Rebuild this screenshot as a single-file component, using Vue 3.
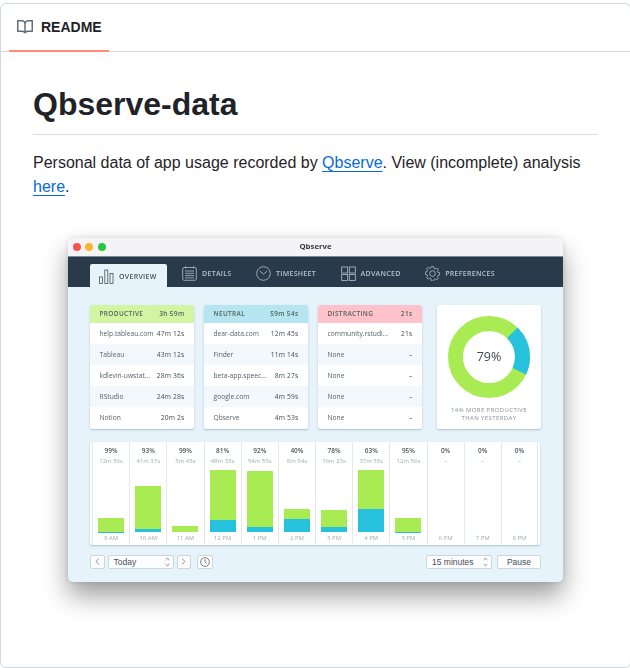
<script setup>
import { computed } from 'vue';

const columns = [
  {
    name: 'PRODUCTIVE', total: '3h 59m', tone: 'green',
    rows: [['help.tableau.com', '47m 12s'], ['Tableau', '43m 12s'], ['kdlevin-uwstat...', '28m 36s'], ['RStudio', '24m 28s'], ['Notion', '20m 2s']]
  },
  {
    name: 'NEUTRAL', total: '59m 54s', tone: 'blue',
    rows: [['dear-data.com', '12m 45s'], ['Finder', '11m 14s'], ['beta-app.speec...', '8m 27s'], ['google.com', '4m 59s'], ['Qbserve', '4m 53s']]
  },
  {
    name: 'DISTRACTING', total: '21s', tone: 'pink',
    rows: [['community.rstudi...', '21s'], ['None', '–'], ['None', '–'], ['None', '–'], ['None', '–']]
  }
];

// hours: green / teal heights in px
const hours = [
  { pct: '99%', time: '12m 56s', label: '9 AM', green: 13.4, teal: 0.3 },
  { pct: '93%', time: '41m 37s', label: '10 AM', green: 43, teal: 2.7 },
  { pct: '99%', time: '5m 43s', label: '11 AM', green: 6, teal: 0 },
  { pct: '81%', time: '48m 33s', label: '12 PM', green: 50, teal: 12 },
  { pct: '92%', time: '54m 55s', label: '1 PM', green: 56.5, teal: 5 },
  { pct: '40%', time: '8m 54s', label: '2 PM', green: 9.7, teal: 13 },
  { pct: '78%', time: '16m 23s', label: '3 PM', green: 17, teal: 4.7 },
  { pct: '63%', time: '37m 55s', label: '4 PM', green: 39, teal: 22.7 },
  { pct: '95%', time: '12m 56s', label: '5 PM', green: 13.5, teal: 0.5 },
  { pct: '0%', time: '–', label: '6 PM', green: 0, teal: 0 },
  { pct: '0%', time: '–', label: '7 PM', green: 0, teal: 0 },
  { pct: '0%', time: '–', label: '8 PM', green: 0, teal: 0 }
];

// donut arc for the teal part
const radius = 33.5;
const circ = 2 * Math.PI * radius;
const tealDash = computed(() => {
  const len = (71 / 360) * circ;
  return `${len} ${circ - len}`;
});
const tealOffset = computed(() => -(44 / 360) * circ);
</script>

<template>
  <div class="page">
    <div class="box">
      <div class="tabs">
        <div class="tab">
          <svg class="book" viewBox="0 0 16 16" width="16" height="16">
            <path d="M0 1.75A.75.75 0 0 1 .75 1h4.253c1.227 0 2.317.59 3 1.501A3.743 3.743 0 0 1 11.006 1h4.245a.75.75 0 0 1 .75.75v10.5a.75.75 0 0 1-.75.75h-4.507a2.25 2.25 0 0 0-1.591.659l-.622.621a.75.75 0 0 1-1.06 0l-.622-.621A2.25 2.25 0 0 0 5.258 13H.75a.75.75 0 0 1-.75-.75Zm7.251 10.324.004-5.073-.002-2.253A2.25 2.25 0 0 0 5.003 2.5H1.5v9h3.757a3.75 3.75 0 0 1 1.994.574ZM8.755 4.75l-.004 7.322a3.752 3.752 0 0 1 1.992-.572H14.5v-9h-3.495a2.25 2.25 0 0 0-2.25 2.25Z" />
          </svg>
          <span>README</span>
        </div>
      </div>

      <article class="article">
        <h1>Qbserve-data</h1>
        <p class="intro">
          Personal data of app usage recorded by <a href="#">Qbserve</a>. View (incomplete) analysis
          <a href="#">here</a>.
        </p>

        <div class="window">
          <div class="titlebar">
            <i class="light red"></i><i class="light amber"></i><i class="light lime"></i>
            <span class="title">Qbserve</span>
          </div>

          <nav class="nav">
            <div class="nav-item active">
              <svg viewBox="0 0 15 15" width="15" height="15" fill="none" stroke="currentColor" stroke-width="0.8">
                <rect x="0.5" y="8" width="3" height="6.5" /><rect x="5.8" y="1" width="3" height="13.5" /><rect x="11" y="4.5" width="3" height="10" />
              </svg>
              <span>OVERVIEW</span>
            </div>
            <div class="nav-item details">
              <svg viewBox="0 0 15 15" width="15" height="15" fill="none" stroke="currentColor" stroke-width="0.8">
                <rect x="0.7" y="1.5" width="13.6" height="12.8" rx="1.5" /><path d="M3.5 0.4v2M11.500 0.4v2M3 5h9M3 7.3h9M3 9.6h9M3 11.9h9" />
              </svg>
              <span>DETAILS</span>
            </div>
            <div class="nav-item timesheet">
              <svg viewBox="0 0 15 15" width="15" height="15" fill="none" stroke="currentColor" stroke-width="0.8">
                <circle cx="7.5" cy="7.5" r="6.8" /><path d="M3.8 5l3.7 3.2L11.200 5" />
              </svg>
              <span>TIMESHEET</span>
            </div>
            <div class="nav-item advanced">
              <svg viewBox="0 0 15 15" width="15" height="15" fill="none" stroke="currentColor" stroke-width="0.8">
                <rect x="0.7" y="1" width="6" height="6" /><rect x="8.3" y="1" width="6" height="6" /><rect x="0.7" y="8.5" width="6" height="6" /><rect x="8.3" y="8.5" width="6" height="6" />
              </svg>
              <span>ADVANCED</span>
            </div>
            <div class="nav-item prefs">
              <svg viewBox="0 0 15 15" width="15" height="15" fill="none" stroke="currentColor" stroke-width="0.8">
                <circle cx="7.5" cy="7.5" r="2.8" />
                <path d="M6.4 0.6h2.2l.4 1.8 1.3.6 1.6-1 1.5 1.5-1 1.6.6 1.3 1.8.4v2.2l-1.8.4-.6 1.3 1 1.6-1.5 1.5-1.6-1-1.3.6-.4 1.8H6.4L6 12.7l-1.3-.6-1.6 1-1.5-1.5 1-1.6L2 8.7 .2 8.3V6.1L2 5.7l.6-1.3-1-1.6L3.100 1.300l1.600 1L6 1.700z" />
              </svg>
              <span>PREFERENCES</span>
            </div>
          </nav>

          <div class="content">
            <div class="summary">
              <section v-for="col in columns" :key="col.name" class="panel">
                <header class="panel-head" :class="col.tone">
                  <span>{{ col.name }}</span>
                  <span>{{ col.total }}</span>
                </header>
                <div v-for="(row, i) in col.rows" :key="i" class="row">
                  <span class="row-name">{{ row[0] }}</span>
                  <span class="row-time">{{ row[1] }}</span>
                </div>
              </section>

              <section class="panel donut-panel">
                <div class="donut">
                  <svg viewBox="0 0 84 84" width="84" height="84">
                    <circle cx="42" cy="42" :r="radius" fill="none" stroke="#a8eb52" stroke-width="15" />
                    <circle
                      cx="42" cy="42" :r="radius" fill="none" stroke="#26c1dc" stroke-width="15"
                      :stroke-dasharray="tealDash" :stroke-dashoffset="tealOffset"
                      transform="rotate(-90 42 42)"
                    />
                  </svg>
                  <span class="donut-label">79%</span>
                </div>
                <p class="donut-note">14% MORE PRODUCTIVE<br />THAN YESTERDAY</p>
              </section>
            </div>

            <div class="chart">
              <div v-for="h in hours" :key="h.label" class="hour">
                <div class="hour-pct">{{ h.pct }}</div>
                <div class="hour-time">{{ h.time }}</div>
                <div class="plot">
                  <div class="bar green" :style="{ height: h.green + 'px' }"></div>
                  <div class="bar teal" :style="{ height: h.teal + 'px' }"></div>
                </div>
                <div class="hour-label">{{ h.label }}</div>
              </div>
            </div>

            <div class="controls">
              <button class="ctl arrow">
                <svg viewBox="0 0 6 8" width="5" height="7" fill="none" stroke="#666" stroke-width="0.9"><path d="M4.500 0.500L1.500 4l3 3.500" /></svg>
              </button>
              <div class="ctl select today">
                <span>Today</span>
                <svg viewBox="0 0 6 12" width="5" height="10" fill="none" stroke="#777" stroke-width="0.8"><path d="M1 4l2-3 2 3M1 8l2 3 2-3" /></svg>
              </div>
              <button class="ctl arrow">
                <svg viewBox="0 0 6 8" width="5" height="7" fill="none" stroke="#666" stroke-width="0.9"><path d="M1.500 0.500L4.500 4l-3 3.500" /></svg>
              </button>
              <button class="ctl clock">
                <svg viewBox="0 0 11 11" width="10" height="10" fill="none" stroke="#666" stroke-width="0.9"><circle cx="5.500" cy="5.500" r="4.800" /><path d="M5.500 2.500v3l2 1.500" /></svg>
              </button>
              <div class="ctl select minutes">
                <span>15 minutes</span>
                <svg viewBox="0 0 6 12" width="5" height="10" fill="none" stroke="#777" stroke-width="0.8"><path d="M1 4l2-3 2 3M1 8l2 3 2-3" /></svg>
              </div>
              <button class="ctl pause">Pause</button>
            </div>
          </div>
        </div>
      </article>
    </div>
  </div>
</template>

<style>
html,
body {
  margin: 0;
  background: #fff;
}
</style>

<style scoped>
.page {
  width: 630px;
  height: 668px;
  padding-top: 3px;
  box-sizing: border-box;
  overflow: hidden;
}

.box {
  box-sizing: border-box;
  width: 631px;
  height: 665px;
  border: 1px solid #d0d7de;
  border-radius: 6px;
  font-family: "Liberation Sans", Arial, sans-serif;
  color: #1f2328;
  overflow: hidden;
}

.tabs {
  height: 47px;
  border-bottom: 1px solid #d0d7de;
  padding-left: 8px;
  display: flex;
}

.tab {
  position: relative;
  display: flex;
  align-items: center;
  gap: 8px;
  width: 100px;
  box-sizing: border-box;
  padding: 0 8px 2px;
  font-size: 14px;
  font-weight: 700;
}

.tab::after {
  content: "";
  position: absolute;
  left: 0;
  right: 0;
  bottom: -1px;
  height: 2px;
  background: #fd8c73;
}

.book {
  fill: #636c76;
  flex: none;
}

.article {
  padding: 32px;
}

h1 {
  margin: 0 0 16px;
  font-size: 32px;
  line-height: 40px;
  font-weight: 700;
  padding-bottom: 9.6px;
  border-bottom: 1px solid #d8dee4;
}

.intro {
  margin: 0;
  font-size: 16px;
  line-height: 24px;
}

.intro a {
  color: #0969da;
  text-decoration: underline;
  text-underline-offset: 3.2px;
}

/* screenshot of the app */
.window {
  width: 495px;
  margin: 39px 0 0 35px;
  border-radius: 5px;
  overflow: hidden;
  background: #e6f3fa;
  font-family: "Open Sans", "Liberation Sans", sans-serif;
  box-shadow: 0 14px 26px rgba(0, 0, 0, 0.38), 0 0 6px rgba(0, 0, 0, 0.12);
  filter: blur(0.35px);
}

.titlebar {
  position: relative;
  height: 18px;
  display: flex;
  align-items: center;
  gap: 4.500px;
  padding-left: 4.500px;
  background: #f4f4f6;
}

.light {
  width: 8px;
  height: 8px;
  border-radius: 50%;
}

.light.red { background: #f8534d; }
.light.amber { background: #fcb52e; }
.light.lime { background: #2ac73f; }

.title {
  position: absolute;
  left: 0;
  right: 0;
  top: 2px;
  text-align: center;
  font-size: 7.800px;
  line-height: 12px;
  font-weight: 700;
  color: #3c3c3c;
}

.nav {
  height: 31px;
  display: flex;
  align-items: flex-end;
  padding-left: 22px;
  background: #293a4a;
  border-top: 1px solid #7f8a94;
  box-sizing: border-box;
}

.nav-item {
  display: flex;
  align-items: center;
  gap: 5px;
  height: 23px;
  padding-bottom: 4px;
  box-sizing: border-box;
  color: #b4c3cd;
  font-size: 7px;
  font-weight: 600;
  letter-spacing: 0.3px;
  white-space: nowrap;
}

.nav-item.active {
  width: 77px;
  padding: 3px 0 0 9px;
  border-radius: 2px 2px 0 0;
  background: #e6f3fa;
  color: #44535f;
}

.details { margin-left: 15px; }
.timesheet { margin-left: 24.500px; }
.advanced { margin-left: 24.500px; }
.prefs { margin-left: 24.500px; }

.content {
  padding: 18px 21px 12px 22px;
}

.summary {
  display: grid;
  grid-template-columns: 104px 104px 104px 109px;
  column-gap: 10px;
}

.panel {
  height: 124px;
  border-radius: 2px;
  background: #fff;
  overflow: hidden;
  box-shadow: 0 1px 2px rgba(70, 100, 120, 0.35);
}

.donut-panel {
  margin-left: 5px;
  display: flex;
  flex-direction: column;
  align-items: center;
  padding-top: 10px;
  box-sizing: border-box;
}

.panel-head {
  height: 18px;
  display: flex;
  justify-content: space-between;
  align-items: center;
  padding: 0 9.500px;
  font-size: 6.500px;
  font-weight: 600;
  letter-spacing: 0.35px;
  color: #55635c;
}

.panel-head.green { background: #d2f5a3; }
.panel-head.blue { background: #b5e5f1; }
.panel-head.pink { background: #ffc2cb; }

.row {
  height: 21px;
  display: flex;
  justify-content: space-between;
  align-items: center;
  padding: 0 9.500px;
  font-size: 6.700px;
  color: #56636d;
}

.row:nth-child(odd) {
  background: #f3f8fc;
}

.row-name {
  white-space: nowrap;
}

.row-time {
  color: #414c55;
  white-space: nowrap;
  letter-spacing: 0.2px;
}

.donut {
  position: relative;
  width: 84px;
  height: 84px;
}

.donut-label {
  position: absolute;
  inset: 0;
  display: flex;
  align-items: center;
  justify-content: center;
  font-size: 12.500px;
  color: #43484d;
}

.donut-note {
  margin: 7px 0 0;
  text-align: center;
  font-size: 6px;
  line-height: 8.500px;
  letter-spacing: 0.4px;
  color: #84949e;
}

.chart {
  margin-top: 13px;
  width: 450px;
  height: 103px;
  box-sizing: border-box;
  padding: 0 2px;
  display: grid;
  grid-template-columns: repeat(12, 1fr);
  background: #fff;
  border-radius: 2px;
  box-shadow: 0 1px 2px rgba(70, 100, 120, 0.35);
}

.hour {
  display: flex;
  flex-direction: column;
  align-items: center;
  border-left: 1px solid #e2e9ee;
  min-width: 0;
}

.hour:last-child {
  border-right: 1px solid #e2e9ee;
}

.hour-pct {
  margin-top: 4px;
  font-size: 6.500px;
  line-height: 9px;
  font-weight: 600;
  color: #50585e;
}

.hour-time {
  margin-top: 2px;
  font-size: 6px;
  line-height: 9px;
  color: #a3abb1;
  white-space: nowrap;
}

.plot {
  flex: 1;
  display: flex;
  flex-direction: column;
  justify-content: flex-end;
}

.bar {
  width: 26px;
}

.bar.green { background: #a8eb52; }
.bar.teal { background: #26c1dc; }

.hour-label {
  height: 12.500px;
  font-size: 6px;
  line-height: 13px;
  color: #a3abb1;
}

.controls {
  margin-top: 10px;
  width: 451px;
  display: flex;
  align-items: center;
  height: 14.500px;
  padding-bottom: 1px;
}

.ctl {
  box-sizing: border-box;
  height: 14.500px;
  padding: 0;
  border: 1px solid #ccd6dc;
  border-radius: 2px;
  background: #fbfdfe;
  display: flex;
  align-items: center;
  justify-content: center;
  font-family: "Liberation Sans", Arial, sans-serif;
  font-size: 8.500px;
  color: #4a4f54;
}

.arrow {
  width: 14.500px;
}

.select {
  justify-content: space-between;
  padding: 0 3px 0 5px;
}

.today {
  width: 66px;
  margin: 0 3px;
}

.clock {
  width: 16px;
  margin-left: 5.500px;
}

.minutes {
  width: 66px;
  margin-left: auto;
}

.pause {
  width: 44px;
  margin-left: 5px;
}
</style>
